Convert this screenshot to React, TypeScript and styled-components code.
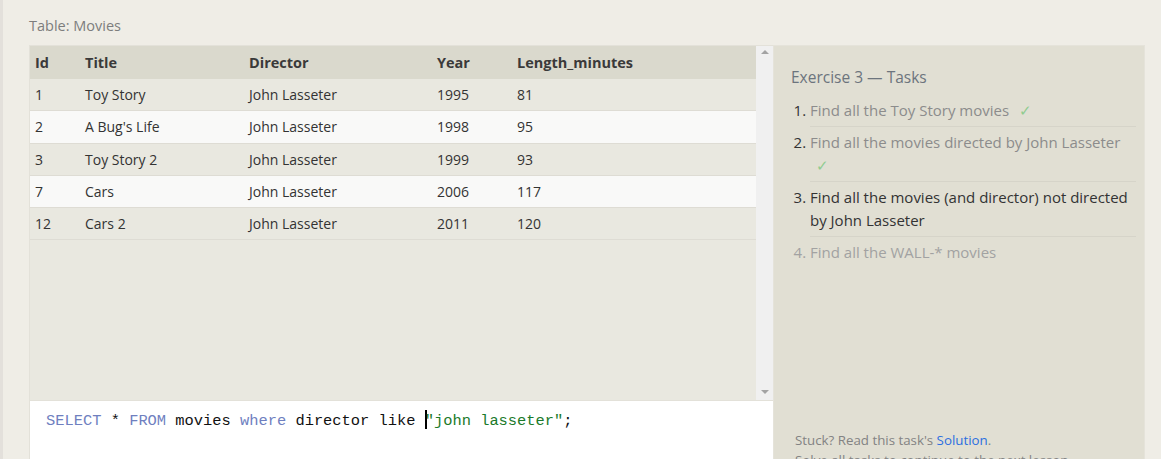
import React from "react";
import styled, { createGlobalStyle } from "styled-components";

const Global = createGlobalStyle`
  html, body { margin: 0; padding: 0; }
  body {
    background: #efede6;
    font-family: "Open Sans", "Noto Sans", sans-serif;
    overflow: hidden;
  }
`;

const Page = styled.div`
  display: flex;
  height: 459px;
  overflow: hidden;
`;

const Strip = styled.div`
  width: 3px;
  flex: none;
  background: #e3e0db;
`;

const Main = styled.div`
  flex: 1;
  padding: 14px 0 0 26px;
  display: flex;
  flex-direction: column;
`;

const Caption = styled.div`
  flex: none;
  font-size: 14.5px;
  color: #7d7d7d;
  line-height: 22px;
  height: 31px;
  padding-top: 1px;
  box-sizing: border-box;
`;

const Columns = styled.div`
  flex: none;
  display: flex;
  align-items: flex-start;
`;

const Left = styled.div`
  width: 743px;
  border: 1px solid #e3e1d9;
  border-right: none;
  display: flex;
  flex-direction: column;
`;

const ResultArea = styled.div`
  flex: none;
  display: flex;
  height: 354px;
  background: #e9e8e0;
`;

const TableWrap = styled.div`
  flex: 1;
`;

const Table = styled.table`
  border-collapse: collapse;
  width: 100%;
  font-size: 14px;
  color: #333;
`;

const Th = styled.th<{ $w?: number }>`
  text-align: left;
  font-weight: 700;
  font-size: 14.5px;
  background: #dad9cd;
  height: 33px;
  padding: 0 5px;
  width: ${(p) => (p.$w ? `${p.$w}px` : "auto")};
  color: #3a3a3a;
`;

const Tr = styled.tr<{ $alt: boolean }>`
  background: ${(p) => (p.$alt ? "#f9f9f8" : "#e9e8e0")};
  border-bottom: 1px solid #dedcd4;
`;

const Td = styled.td`
  height: 31.25px;
  padding: 0 5px;
`;

const Scrollbar = styled.div`
  width: 17px;
  background: #f0f0f0;
  display: flex;
  flex-direction: column;
  justify-content: space-between;
  align-items: center;
  padding: 4px 0 6px;
  box-sizing: border-box;
`;

const Arrow = styled.div<{ $down?: boolean }>`
  width: 0;
  height: 0;
  border-left: 4px solid transparent;
  border-right: 4px solid transparent;
  ${(p) =>
    p.$down
      ? "border-top: 4px solid #a3a3a3;"
      : "border-bottom: 4px solid #a3a3a3;"}
`;

const Editor = styled.div`
  flex: none;
  background: #ffffff;
  border-top: 1px solid #e3e1d9;
  height: 80px;
  padding: 9px 0 0 16px;
  font-family: "Liberation Mono", "DejaVu Sans Mono", monospace;
  font-size: 15.4px;
  color: #111;
  white-space: pre;
`;

const Kw = styled.span`
  color: #6f7fbf;
`;

const Str = styled.span`
  color: #1b7a2a;
`;

const Cursor = styled.span`
  display: inline-block;
  width: 2px;
  height: 19px;
  background: #000;
  vertical-align: -4px;
  margin-right: -2px;
`;

const Panel = styled.div`
  width: 372px;
  height: 438px;
  background: #e1dfd3;
  border: 1px solid #e5e3da;
  box-sizing: border-box;
  padding: 20px 4px 0 17px;
  display: flex;
  flex-direction: column;
`;

const PanelTitle = styled.div`
  font-size: 15.5px;
  color: #6c747d;
  line-height: 22px;
  margin-bottom: 7px;
`;

const TaskList = styled.ol`
  margin: 0;
  padding: 0 4px 0 19px;
  font-size: 15px;
  line-height: 23px;
`;

const Task = styled.li<{ $state: "done" | "current" | "todo"; $last?: boolean }>`
  padding: 4px 0;
  border-bottom: ${(p) => (p.$last ? "none" : "1px solid #d6d4c9")};
  color: ${(p) =>
    p.$state === "current" ? "#333" : p.$state === "done" ? "#8c8c8c" : "#a2a2a2"};
  &::marker {
    color: ${(p) => (p.$state === "todo" ? "#a2a2a2" : "#333")};
  }
`;

const Check = styled.span`
  color: #90cc90;
  margin-left: 6px;
`;

const Footer = styled.div`
  margin-top: auto;
  padding-left: 4px;
  font-size: 13.3px;
  line-height: 20px;
  color: #838383;
  height: 52px;
  flex: none;
`;

const Link = styled.a`
  color: #2c6fe0;
  text-decoration: none;
`;

const rows = [
  [1, "Toy Story", "John Lasseter", 1995, 81],
  [2, "A Bug's Life", "John Lasseter", 1998, 95],
  [3, "Toy Story 2", "John Lasseter", 1999, 93],
  [7, "Cars", "John Lasseter", 2006, 117],
  [12, "Cars 2", "John Lasseter", 2011, 120],
];

export default function App() {
  return (
    <>
      <Global />
      <Page>
        <Strip />
        <Main>
          <Caption>Table: Movies</Caption>
          <Columns>
            <Left>
              <ResultArea>
                <TableWrap>
                  <Table>
                    <thead>
                      <tr>
                        <Th $w={40}>Id</Th>
                        <Th $w={154}>Title</Th>
                        <Th $w={178}>Director</Th>
                        <Th $w={70}>Year</Th>
                        <Th>Length_minutes</Th>
                      </tr>
                    </thead>
                    <tbody>
                      {rows.map((r, i) => (
                        <Tr key={i} $alt={i % 2 === 1}>
                          {r.map((c, j) => (
                            <Td key={j}>{c}</Td>
                          ))}
                        </Tr>
                      ))}
                    </tbody>
                  </Table>
                </TableWrap>
                <Scrollbar>
                  <Arrow />
                  <Arrow $down />
                </Scrollbar>
              </ResultArea>
              <Editor>
                <Kw>SELECT</Kw> * <Kw>FROM</Kw> movies <Kw>where</Kw> director like{" "}
                <Cursor />
                <Str>"john lasseter"</Str>;
              </Editor>
            </Left>
            <Panel>
              <PanelTitle>Exercise 3 — Tasks</PanelTitle>
              <TaskList>
                <Task $state="done">
                  Find all the Toy Story movies <Check>✓</Check>
                </Task>
                <Task $state="done">
                  Find all the movies directed by John Lasseter <Check>✓</Check>
                </Task>
                <Task $state="current">
                  Find all the movies (and director) not directed by John Lasseter
                </Task>
                <Task $state="todo" $last>
                  Find all the WALL-* movies
                </Task>
              </TaskList>
              <Footer>
                Stuck? Read this task's <Link href="#">Solution</Link>.
                <br />
                Solve all tasks to continue to the next lesson.
              </Footer>
            </Panel>
          </Columns>
        </Main>
      </Page>
    </>
  );
}
